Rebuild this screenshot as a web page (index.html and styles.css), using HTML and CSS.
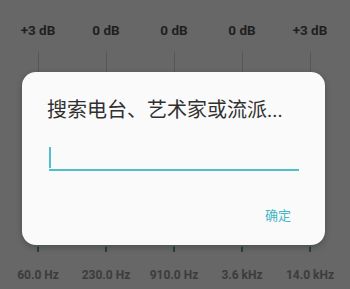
FILE: index.html
```html
<!DOCTYPE html>
<html lang="zh-CN">
<head>
    <meta charset="UTF-8">
    <meta name="viewport" content="width=device-width, initial-scale=1.0">
    <title>均衡器</title>
    <link rel="stylesheet" href="styles.css">
</head>
<body>
    <div class="eq">
        <div class="band">
            <div class="db">+3 dB</div>
            <div class="slider"></div>
            <div class="tick"></div>
            <div class="freq">60.0 Hz</div>
        </div>
        <div class="band">
            <div class="db">0 dB</div>
            <div class="slider"></div>
            <div class="tick"></div>
            <div class="freq">230.0 Hz</div>
        </div>
        <div class="band">
            <div class="db">0 dB</div>
            <div class="slider"></div>
            <div class="tick"></div>
            <div class="freq">910.0 Hz</div>
        </div>
        <div class="band">
            <div class="db">0 dB</div>
            <div class="slider"></div>
            <div class="tick"></div>
            <div class="freq">3.6 kHz</div>
        </div>
        <div class="band">
            <div class="db">+3 dB</div>
            <div class="slider"></div>
            <div class="tick"></div>
            <div class="freq">14.0 kHz</div>
        </div>
    </div>

    <div class="dialog">
        <div class="dialog-title">搜索电台、艺术家或流派...</div>
        <div class="search-field">
            <span class="caret"></span>
        </div>
        <div class="dialog-actions">
            <span class="btn-ok">确定</span>
        </div>
    </div>
</body>
</html>
```

FILE: styles.css
```css
body {
    margin: 0;
    width: 350px;
    height: 289px;
    overflow: hidden;
    background-color: #676767;
    font-family: Roboto, "Noto Sans CJK SC", sans-serif;
}
.eq {
    display: flex;
    padding: 22px 0 0 4px;
}
.band {
    width: 68px;
    display: flex;
    flex-direction: column;
    align-items: center;
}
.db, .freq {
    height: 16px;
    line-height: 16px;
    font-weight: bold;
    white-space: nowrap;
}
.db {
    font-size: 13.5px;
    color: #1f1f1f;
}
.freq {
    font-size: 12px;
    color: #3c3c3c;
    margin-top: 15px;
}
.slider {
    width: 1px;
    height: 195px;
    margin-top: 14px;
    background-color: #575757;
}
.tick {
    width: 2px;
    height: 5px;
    background-color: #1f4536;
}
.dialog {
    position: absolute;
    left: 22px;
    top: 72px;
    width: 303px;
    height: 173px;
    box-sizing: border-box;
    padding: 26px 26px 0 25px;
    background-color: #fafafa;
    border-radius: 14px;
    box-shadow: 0 2px 6px rgba(0, 0, 0, 0.25);
    font-family: Roboto, "Noto Sans CJK SC", sans-serif;
}
.dialog-title {
    font-size: 20px;
    line-height: 25px;
    color: #303030;
    white-space: nowrap;
}
.search-field {
    margin: 24px 0 0 2px;
    height: 22px;
    border-bottom: 2px solid #4fbfcc;
    display: flex;
    align-items: flex-end;
}
.caret {
    width: 2px;
    height: 21px;
    margin-bottom: 1px;
    background-color: #4fbfcc;
}
.dialog-actions {
    display: flex;
    justify-content: flex-end;
    margin-top: 36px;
    padding-right: 8px;
}
.btn-ok {
    font-size: 13px;
    line-height: 18px;
    color: #45b6c6;
}
```
